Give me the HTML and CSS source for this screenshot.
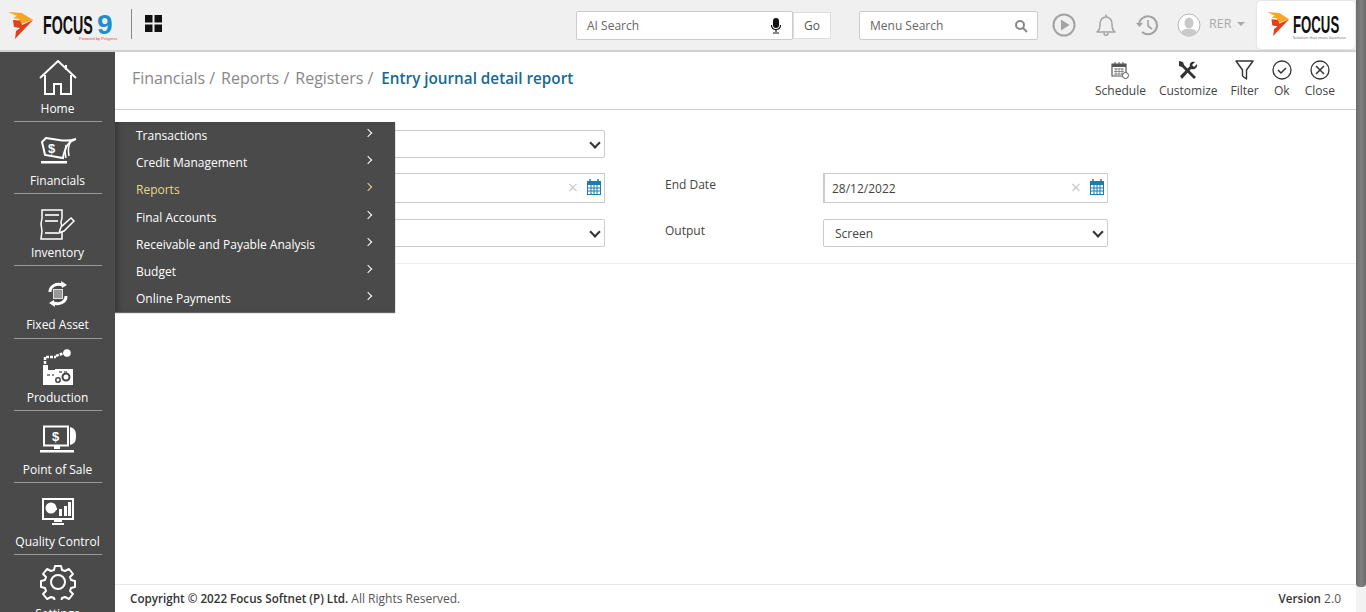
FILE: index.html
```html
<!DOCTYPE html>
<html lang="en">
<head>
<meta charset="utf-8">
<title>Entry journal detail report</title>
<link rel="stylesheet" href="styles.css">
</head>
<body>
<div class="app">
  <div class="shell">
  <header class="topbar">
    <div class="brand">
      <svg class="flame" width="26" height="28" viewBox="0 0 26 28"><path d="M0 0L14 1 25 8 13 12 11 7 5 6 9 4Z" fill="#f6a623"/><path d="M5 8L12 8.500 14 13 25 8 7 27 8 19 12 16 6 15Z" fill="#e2401c"/></svg>
      <span class="focus-word">FOCUS</span>
      <span class="nine">9<small>Powered by Progress</small></span>
    </div>
    <span class="brand-sep"></span>
    <svg class="grid-icon" width="17" height="17" viewBox="0 0 17 17"><path d="M0 0h7.500v7.500H0zM9.500 0H17v7.500H9.500zM0 9.500h7.500V17H0zM9.500 9.500H17V17H9.500z" fill="#111"/></svg>
    <div class="ai-search">
      <div class="field ai-field"><span>AI Search</span>
        <svg width="12" height="16" viewBox="0 0 12 16"><rect x="3" y="0" width="6" height="10" rx="3" fill="#111"/><path d="M1.500 7c0 6 9 6 9 0M6 12v2M3 15h6" fill="none" stroke="#111" stroke-width="1.200"/></svg>
      </div>
      <div class="go">Go</div>
    </div>
    <div class="field menu-field"><span>Menu Search</span>
      <svg width="14" height="14" viewBox="0 0 14 14"><circle cx="6" cy="6" r="4" fill="none" stroke="#888" stroke-width="2"/><path d="M9 9l4 4" stroke="#888" stroke-width="2"/></svg>
    </div>
    <div class="tools">
      <svg width="24" height="24" viewBox="0 0 24 24"><circle cx="12" cy="12" r="10.500" fill="none" stroke="#a3a3a3" stroke-width="2"/><path d="M9 6.500v11l8.500-5.500z" fill="#a3a3a3"/></svg>
      <svg width="22" height="24" viewBox="0 0 22 24"><path d="M2 19c2-2 3-3 3-8 0-4 2.500-7 6-7s6 3 6 7c0 5 1 6 3 8zM9 20c0 3 4 3 4 0M11 4V1.500" fill="none" stroke="#a3a3a3" stroke-width="1.500" stroke-linejoin="round"/></svg>
      <svg width="24" height="22" viewBox="0 0 24 22"><path d="M3 11a9 9 0 1 1 3 7" fill="none" stroke="#a3a3a3" stroke-width="2"/><path d="M0 9l3.500 4 3.500-4z" fill="#a3a3a3"/><path d="M12 6v6l4 3" fill="none" stroke="#a3a3a3" stroke-width="1.600"/></svg>
      <svg class="avatar" width="24" height="24" viewBox="0 0 24 24"><circle cx="12" cy="12" r="11" fill="#fff" stroke="#b5b5b5"/><ellipse cx="12" cy="10" rx="4.500" ry="5.500" fill="#c9c9c9"/><path d="M4 20c1-4 5-4 8-4s7 0 8 4a11 11 0 0 1-16 0z" fill="#c9c9c9"/></svg>
      <span class="user">RER</span><span class="caret"></span>
    </div>
    <div class="logo-card">
      <svg width="23" height="27" viewBox="0 0 26 28"><path d="M0 0L14 1 25 8 13 12 11 7 5 6 9 4Z" fill="#f6a623"/><path d="M5 8L12 8.500 14 13 25 8 7 27 8 19 12 16 6 15Z" fill="#e2401c"/></svg>
      <div class="logo-text"><b>FOCUS</b><small>Solution that move business</small></div>
    </div>
  </header>

  <div class="body">
    <nav class="sidenav">
      <a class="nav-item">
        <svg width="38" height="36" viewBox="0 0 38 36"><path d="M1 18L19 1l18 17M27 5v5M6 15v19h9V24h7v10h10V15" fill="none" stroke="#fff" stroke-width="2"/></svg>
        <span>Home</span>
      </a>
      <a class="nav-item nudge-3">
        <svg width="38" height="28" viewBox="0 0 38 28"><path d="M3 5L7 1l13 2c6 1 11 1 17-1-7 2-11 7-13 19L6 18C5 13 4 9 3 5z" fill="none" stroke="#fff" stroke-width="2"/><path d="M27 8c-1 4-1 9 0 13M31 6c-2 4-2 8-1 13" fill="none" stroke="#fff" stroke-width="1.500"/><path d="M2 24h26v2.500H2z" fill="#fff"/><text x="9" y="16" class="dollar">$</text></svg>
        <span>Financials</span>
      </a>
      <a class="nav-item">
        <svg width="38" height="31" viewBox="0 0 38 31"><path d="M3 1h20v8l-1 4 1 6v11H2l1-8-1-7 1-6z" fill="none" stroke="#fff" stroke-width="1.500"/><path d="M6 5h14v2H6zM6 11h13v2H6zM6 23h13v2H6z" fill="#ddd"/><path d="M20 24l2-6L32 9l3 3-10 10z" fill="#444" stroke="#fff" stroke-width="1.500"/></svg>
        <span>Inventory</span>
      </a>
      <a class="nav-item fixed-asset">
        <svg width="24" height="28" viewBox="0 0 24 28"><path d="M4 12C4 6 10 3 17 5M20 16c0 6-6 9-13 7" fill="none" stroke="#fff" stroke-width="3"/><path d="M15 1l6 4-5 3zM9 27l-6-4 5-3z" fill="#fff"/><path d="M7 9h10v10H7z" fill="#ddd"/><path d="M8 11h8M8 13h8M8 15h8M8 17h8" stroke="#555"/></svg>
        <span>Fixed Asset</span>
      </a>
      <a class="nav-item">
        <svg width="32" height="36" viewBox="0 0 32 36"><path d="M1 36V16h5v5l7 0v-1h18v16z" fill="#fff"/><path d="M3 15V8h11" fill="none" stroke="#fff" stroke-width="2.500" stroke-dasharray="3 1"/><circle cx="25" cy="4" r="3.800" fill="#fff"/><path d="M14 7c3-1 5-2 8-3" stroke="#fff" stroke-width="2.500" stroke-dasharray="3 1"/><circle cx="24" cy="28" r="3.500" fill="none" stroke="#444" stroke-width="2"/><circle cx="16" cy="31" r="2.200" fill="none" stroke="#444" stroke-width="1.500"/><path d="M17 23h3M22 23h3M5 26h3M10 26h2" stroke="#666" stroke-width="1.500"/></svg>
        <span>Production</span>
      </a>
      <a class="nav-item nudge-4">
        <svg width="38" height="28" viewBox="0 0 38 28"><path d="M5 1.500h24v19H5z" fill="none" stroke="#fff" stroke-width="2"/><path d="M31 2c4 1 6 3 6 9s-2 8-6 9z" fill="#fff"/><path d="M15 21h6v3h-6zM1 25h34v2.500H1z" fill="#fff"/><text x="13" y="16" class="dollar">$</text></svg>
        <span>Point of Sale</span>
      </a>
      <a class="nav-item nudge-3">
        <svg width="34" height="28" viewBox="0 0 34 28"><path d="M2 1h30v20H2z" fill="none" stroke="#fff" stroke-width="2"/><circle cx="10" cy="10" r="5.500" fill="#fff"/><path d="M10 10h6v2h-6zM18 11h3v7h-3zM23 8h3v10h-3zM27 4h3v14h-3z" fill="#fff"/><path d="M13 21h8v3h-8zM11 25h12v2H11z" fill="#fff"/></svg>
        <span>Quality Control</span>
      </a>
      <a class="nav-item last">
        <svg width="38" height="36" viewBox="0 0 38 36"><path d="M16 2h6l1 4 3 1 4-2 4 5-3 3 1 3 4 1v6l-4 1-1 3 3 3-4 5-4-2-3 1-1 4h-6l-1-4-3-1-4 2-4-5 3-3-1-3-4-1v-6l4-1 1-3-3-3 4-5 4 2 3-1z" fill="none" stroke="#fff" stroke-width="2" stroke-linejoin="round"/><circle cx="19" cy="18" r="7" fill="none" stroke="#fff" stroke-width="2"/></svg>
        <span>Settings</span>
      </a>
    </nav>

    <main class="content">
      <div class="page-head">
        <div class="crumbs">
          <span>Financials /</span><span>Reports /</span><span>Registers /</span><strong>Entry journal detail report</strong>
        </div>
        <div class="actions">
          <div class="action">
            <svg width="18" height="18" viewBox="0 0 18 18"><path d="M1 3h14v12H1z" fill="#fff" stroke="#555" stroke-width="1.200"/><path d="M1 3h14v3H1z" fill="#555"/><path d="M4 1v3M8 1v3M12 1v3" stroke="#555"/><path d="M3 8h10M3 10.500h10M3 13h10M5 7v7M8 7v7M11 7v7" stroke="#777" stroke-width=".8"/><circle cx="14.500" cy="14.500" r="3" fill="#fff" stroke="#555"/></svg>
            <span>Schedule</span>
          </div>
          <div class="action">
            <svg width="22" height="20" viewBox="0 0 22 20"><path d="M2 1l4 1 1 3 12 12-2 2L5 7 2 6z" fill="#333"/><path d="M20 4l-3 3-2-2 3-3c-3-1-6 1-5 4L3 16l2 3 9-10c3 1 7-1 6-5z" fill="#333"/></svg>
            <span>Customize</span>
          </div>
          <div class="action">
            <svg width="20" height="20" viewBox="0 0 20 20"><path d="M1 1h17l-6.500 9v9l-4-3v-6z" fill="none" stroke="#333" stroke-width="1.400" stroke-linejoin="round"/></svg>
            <span>Filter</span>
          </div>
          <div class="action">
            <svg width="20" height="20" viewBox="0 0 20 20"><circle cx="10" cy="10" r="9" fill="none" stroke="#333" stroke-width="1.300"/><path d="M6 10l3 3 5-5" fill="none" stroke="#333" stroke-width="1.500"/></svg>
            <span>Ok</span>
          </div>
          <div class="action">
            <svg width="20" height="20" viewBox="0 0 20 20"><circle cx="10" cy="10" r="9" fill="none" stroke="#333" stroke-width="1.300"/><path d="M6 6l8 8M14 6l-8 8" stroke="#333" stroke-width="1.500"/></svg>
            <span>Close</span>
          </div>
        </div>
      </div>

      <section class="form">
        <div class="row row-one">
          <div class="cell"><div class="select wide"></div></div>
        </div>
        <div class="row row-two">
          <div class="cell">
            <div class="date wide">
              <i class="clear">×</i>
              <svg class="cal" width="14" height="16" viewBox="0 0 14 16"><path d="M0 2h14v14H0z" fill="#1a7db0"/><path d="M1 6h12v9H1z" fill="#fff"/><path d="M3 0v3M11 0v3" stroke="#1a7db0" stroke-width="1.500"/><path d="M4 6v9M7 6v9M10 6v9M1 9h12M1 12h12" stroke="#1a7db0"/></svg>
            </div>
          </div>
          <label class="lbl">End Date</label>
          <div class="date end">
            <span>28/12/2022</span>
            <i class="clear">×</i>
            <svg class="cal" width="14" height="16" viewBox="0 0 14 16"><path d="M0 2h14v14H0z" fill="#1a7db0"/><path d="M1 6h12v9H1z" fill="#fff"/><path d="M3 0v3M11 0v3" stroke="#1a7db0" stroke-width="1.500"/><path d="M4 6v9M7 6v9M10 6v9M1 9h12M1 12h12" stroke="#1a7db0"/></svg>
          </div>
        </div>
        <div class="row row-three">
          <div class="cell"><div class="select wide"></div></div>
          <label class="lbl">Output</label>
          <div class="select end"><span>Screen</span></div>
        </div>
      </section>

      <div class="spacer"></div>
      <footer class="footer">
        <div><b>Copyright © 2022 Focus Softnet (P) Ltd.</b> All Rights Reserved.</div>
        <div><b>Version</b> 2.0</div>
      </footer>

      <ul class="flyout">
        <li>Transactions</li>
        <li>Credit Management</li>
        <li class="active">Reports</li>
        <li>Final Accounts</li>
        <li>Receivable and Payable Analysis</li>
        <li>Budget</li>
        <li>Online Payments</li>
      </ul>
    </main>
  </div>
  </div>
  <div class="scrollbar"><div class="thumb"></div><div class="track"></div></div>
</div>
</body>
</html>
```
FILE: styles.css
```css
* { box-sizing: border-box; }
html, body { margin: 0; height: 100%; overflow: hidden; }
body { font-family: "Open Sans", "Noto Sans", sans-serif; font-size: 12px; color: #333; background: #fff; }
.app { height: 612px; display: flex; }
.shell { flex: 1; min-width: 0; display: flex; flex-direction: column; }
.scrollbar { width: 10px; flex: none; display: flex; flex-direction: column; background: #f0f0f0; }
.thumb { flex: 1; background: linear-gradient(to right, #6a6a6a, #808080 50%, #6a6a6a); border-radius: 0 0 4px 4px; }
.track { height: 25px; background: #f2f2f2; }

.topbar { height: 52px; flex: none; display: flex; align-items: center; background: #f0f0f0; border-bottom: 2px solid #d0d0d0; position: relative; }
.brand { width: 131px; flex: none; display: flex; align-items: center; padding-left: 8px; height: 100%; }
.flame { flex: none; margin-top: 2px; }
.focus-word { font-family: "Liberation Sans", sans-serif; font-weight: 700; font-size: 25px; color: #111; margin-left: 9px; transform: scaleX(.57); transform-origin: left; width: 50px; flex: none; line-height: 1; margin-top: 1px; }
.nine { font-family: "Liberation Sans", sans-serif; font-weight: 700; font-size: 28px; color: #1d8ed0; position: relative; line-height: 28px; margin-left: 4px; margin-top: -1px; }
.nine small { position: absolute; left: -18px; top: 26px; font-size: 4px; line-height: 1; color: #e44; white-space: nowrap; font-weight: 400; }
.brand-sep { width: 1px; height: 30px; background: #888; flex: none; margin-top: -2px; }
.grid-icon { margin-left: 13px; margin-top: -4px; flex: none; }

.field { background: #fff; border: 1px solid #ccc; border-radius: 2px; height: 29px; display: flex; align-items: center; justify-content: space-between; color: #666; font-size: 12px; }
.ai-search { display: flex; align-items: center; margin-left: 414px; margin-top: 1px; }
.ai-field { width: 217px; padding: 0 10px; }
.go { width: 38px; height: 27px; background: #fff; border: 1px solid #ddd; display: flex; align-items: center; justify-content: center; color: #555; }
.menu-field { width: 179px; margin-left: 28px; padding: 0 9px 0 10px; margin-top: 1px; }
.tools { display: flex; align-items: center; margin-left: 14px; gap: 19px; margin-top: -1px; }
.avatar { margin-left: -2px; }
.user { color: #aaa; font-size: 12.500px; margin-left: -11px; margin-top: -3px; }
.caret { width: 0; height: 0; border-left: 4.500px solid transparent; border-right: 4.500px solid transparent; border-top: 4px solid #aaa; margin-left: -13px; margin-top: -2px; }
.logo-card { width: 98px; height: 48px; background: #fff; border-radius: 4px; box-shadow: 0 0 2px #ccc; display: flex; align-items: center; padding-left: 10px; gap: 3px; margin-left: auto; margin-right: 1px; margin-top: -1px; }
.logo-text { display: flex; flex-direction: column; line-height: 1; margin-top: 6px; }
.logo-text b { font-family: "Liberation Sans", sans-serif; font-size: 24px; color: #111; transform: scaleX(.55); transform-origin: left; width: 46px; line-height: 20px; }
.logo-text small { font-size: 4px; color: #666; white-space: nowrap; margin-top: 1px; }

.body { flex: 1; display: flex; min-height: 0; }
.sidenav { width: 115px; flex: none; background: #4a4a4a; overflow: hidden; display: flex; flex-direction: column; align-items: center; }
.nav-item { width: 88px; height: 72.2px; flex: none; display: flex; flex-direction: column; align-items: center; justify-content: flex-end; border-bottom: 1px solid #999; color: #fff; font-size: 12px; padding-bottom: 4px; gap: 5px; }
.nav-item span { line-height: 16px; white-space: nowrap; }
.nav-item.last { border-bottom: 0; height: 72px; justify-content: flex-start; padding-top: 9px; gap: 6px; }
.nav-item:first-child { height: 70px; }
.nudge-4 svg { margin-bottom: 4px; }
.nudge-3 svg { margin-bottom: 3px; }
.fixed-asset { padding-bottom: 5px; }
.fixed-asset svg { margin-bottom: 4px; }
.dollar { font: 700 13px "Liberation Sans", sans-serif; fill: #fff; }

.content { flex: 1; display: flex; flex-direction: column; position: relative; min-width: 0; }
.page-head { height: 58px; flex: none; display: flex; justify-content: space-between; border-bottom: 1px solid #d0d0d0; padding: 0 21px 0 17px; }
.crumbs { display: flex; gap: 4px; align-items: center; font-size: 16px; color: #888; height: 52px; }
.crumbs span { margin-right: 2px; }
.crumbs strong { font-weight: 600; font-size: 15.250px; color: #146a94; margin-left: 2px; }
.actions { display: flex; gap: 13px; padding-top: 8px; }
.action { display: flex; flex-direction: column; align-items: center; color: #444; font-size: 12px; gap: 3px; line-height: 16px; }
.action svg { height: 20px; }

.form { height: 154px; flex: none; border-bottom: 1px solid #eee; padding-top: 20px; }
.row { display: flex; position: relative; align-items: flex-start; }
.row-one { height: 43px; }
.row-two { height: 46px; }
.cell { width: 490px; display: flex; justify-content: flex-end; }
.wide { width: 250px; }
.select { height: 28px; border: 1px solid #ccc; border-radius: 2px; background: #fff; position: relative; display: flex; align-items: center; padding-left: 11px; color: #444; font-size: 12px; }
.select::after { content: ""; position: absolute; right: 5px; top: 8px; width: 6px; height: 6px; border-right: 2px solid #333; border-bottom: 2px solid #333; transform: rotate(45deg); }
.date { height: 30px; border: 1px solid #ccc; border-left-width: 2px; background: #fff; display: flex; align-items: center; padding: 0 3px 0 7px; color: #444; font-size: 12px; position: relative; }
.date span { flex: 1; }
.clear { font-style: normal; color: #ccc; font-size: 18px; line-height: 1; position: absolute; right: 26px; top: 4px; }
.date .cal { position: absolute; right: 3px; top: 5px; }
.lbl { width: 158px; margin-left: 60px; padding-top: 3px; font-size: 12px; color: #444; }
.end { width: 285px; }

.spacer { flex: 1; }
.footer { height: 28px; flex: none; border-top: 1px solid #e8e8e8; display: flex; justify-content: space-between; align-items: center; padding: 0 15px 0 15px; color: #555; font-size: 12px; }
.footer b { color: #333; font-weight: 600; font-size: 11.650px; }

.flyout { position: absolute; left: 0; top: 70px; width: 280px; height: 190px; margin: 0; padding: 0; list-style: none; background: #4a4a4a; box-shadow: inset 6px 0 6px -4px #333, 0 1px 1px #666; }
.flyout li { height: 27.200px; padding: 5px 0 0 21px; line-height: 17px; color: #fff; font-size: 12px; position: relative; }
.flyout li::after { content: ""; position: absolute; left: 250px; top: 8px; width: 5px; height: 5px; border-top: 1.500px solid #fff; border-right: 1.500px solid #fff; transform: rotate(45deg); }
.flyout li.active { color: #e0d98c; }
.flyout li.active::after { border-color: #e0d98c; }
```
